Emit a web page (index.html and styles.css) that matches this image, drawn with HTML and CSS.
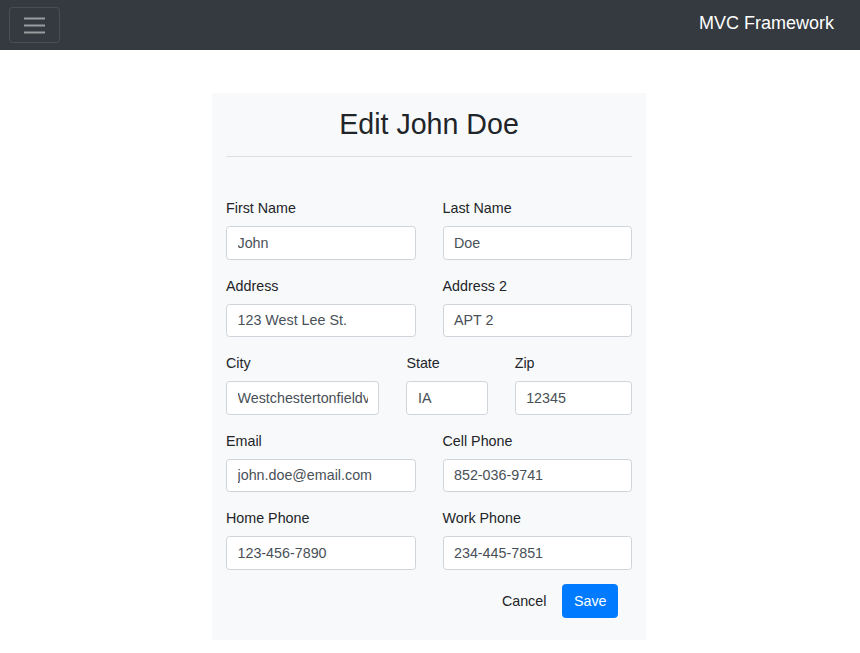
FILE: index.html
```html
<!DOCTYPE html>
<html lang="en">
<head>
<meta charset="utf-8">
<title>Edit John Doe</title>
<link rel="stylesheet" href="styles.css">
</head>
<body>
<nav class="navbar">
  <button class="toggler" type="button" aria-label="Toggle navigation">
    <svg width="21" height="17" viewBox="0 0 21 17" aria-hidden="true">
      <path d="M0 1.5h21M0 8.5h21M0 15.5h21" stroke="rgba(255,255,255,0.5)" stroke-width="2" fill="none"/>
    </svg>
  </button>
  <span class="brand">MVC Framework</span>
</nav>
<main class="page">
  <section class="card">
    <h1 class="title">Edit John Doe</h1>
    <hr class="divider">
    <form class="form">
      <div class="fields">
        <div class="row">
          <div class="col col-6"><label class="label">First Name</label><input class="input" value="John"></div>
          <div class="col col-6"><label class="label">Last Name</label><input class="input" value="Doe"></div>
        </div>
        <div class="row">
          <div class="col col-6"><label class="label">Address</label><input class="input" value="123 West Lee St."></div>
          <div class="col col-6"><label class="label">Address 2</label><input class="input" value="APT 2"></div>
        </div>
        <div class="row">
          <div class="col col-5"><label class="label">City</label><input class="input" value="Westchestertonfieldville"></div>
          <div class="col col-3"><label class="label">State</label><input class="input" value="IA"></div>
          <div class="col col-4"><label class="label">Zip</label><input class="input" value="12345"></div>
        </div>
        <div class="row">
          <div class="col col-6"><label class="label">Email</label><input class="input" value="john.doe@email.com"></div>
          <div class="col col-6"><label class="label">Cell Phone</label><input class="input" value="852-036-9741"></div>
        </div>
        <div class="row">
          <div class="col col-6"><label class="label">Home Phone</label><input class="input" value="123-456-7890"></div>
          <div class="col col-6"><label class="label">Work Phone</label><input class="input" value="234-445-7851"></div>
        </div>
      </div>
      <div class="actions">
        <button class="btn btn-link" type="button">Cancel</button>
        <button class="btn btn-primary" type="button">Save</button>
      </div>
    </form>
  </section>
</main>
</body>
</html>
```
FILE: styles.css
```css
* { box-sizing: border-box; }

html, body {
  margin: 0;
  padding: 0;
  background: #ffffff;
  font-family: "Liberation Sans", Arial, sans-serif;
  font-size: 14.3px;
  line-height: 1.5;
  color: #212529;
}

.navbar {
  height: 50px;
  background: #343a40;
  display: flex;
  align-items: center;
  justify-content: space-between;
  padding: 0 26px 0 9px;
}

.toggler {
  width: 51px;
  height: 36px;
  padding: 0;
  background: transparent;
  border: 1px solid rgba(255, 255, 255, 0.1);
  border-radius: 3.5px;
  display: flex;
  align-items: center;
  justify-content: center;
}

.toggler svg { display: block; }

.brand {
  color: #ffffff;
  font-size: 18px;
  line-height: 27px;
  padding-bottom: 4px;
}

.page {
  padding: 43px 2px 0 0;
}

.card {
  width: 434px;
  margin: 0 auto;
  background: #f8f9fa;
  padding: 14px 14px 22px;
}

.title {
  margin: 0;
  font-size: 28.6px;
  font-weight: 400;
  line-height: 34px;
  text-align: center;
  color: #212529;
}

.divider {
  margin: 15px 0 41px;
  border: 0;
  border-top: 1px solid rgba(0, 0, 0, 0.1);
  height: 0;
}

.form { margin: 0; }

.fields {
  display: flex;
  flex-direction: column;
  gap: 16px;
}

.row {
  display: flex;
  margin: 0 -13.5px;
}

.col { padding: 0 13.5px; }
.col-6 { flex: 0 0 50%; }
.col-5 { flex: 0 0 41.6667%; }
.col-4 { flex: 0 0 33.3333%; }
.col-3 { flex: 0 0 25%; }

.label {
  display: block;
  margin-bottom: 7px;
  line-height: 21px;
  font-size: 14.3px;
  color: #212529;
}

.input {
  display: block;
  width: 100%;
  height: 33.5px;
  padding: 5.25px 10.5px;
  font-family: "Liberation Sans", Arial, sans-serif;
  font-size: 14.3px;
  line-height: 21px;
  color: #495057;
  background: #ffffff;
  border: 1px solid #ced4da;
  border-radius: 3.5px;
  outline: none;
}

.actions {
  display: flex;
  justify-content: flex-end;
  gap: 4.5px;
  margin-top: 14.5px;
  padding-right: 14px;
}

.btn {
  height: 34px;
  padding: 0 10.5px;
  font-family: "Liberation Sans", Arial, sans-serif;
  font-size: 14.3px;
  line-height: 21px;
  border: 1px solid transparent;
  border-radius: 3.5px;
  background: transparent;
}

.btn-link { color: #212529; }

.btn-primary {
  background: #007bff;
  border-color: #007bff;
  color: #ffffff;
}
```
